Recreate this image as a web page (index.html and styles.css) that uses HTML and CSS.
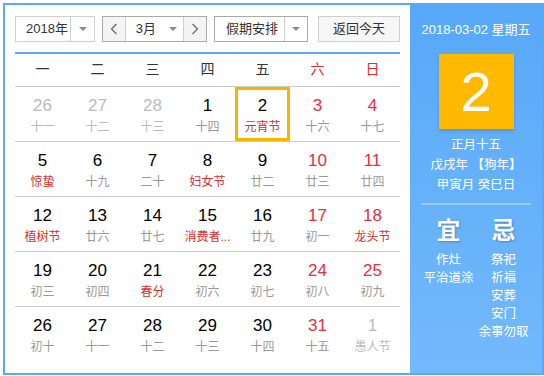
FILE: index.html
```html
<!DOCTYPE html>
<html lang="zh-CN">
<head>
<meta charset="utf-8">
<title>万年历</title>
<link rel="stylesheet" href="styles.css">
</head>
<body>
<div class="cal">
  <div class="main">
    <div class="toolbar">
      <div class="sel sel-year">
        <span class="sel-text">2018年</span>
        <span class="sel-arrow"><i class="tri"></i></span>
      </div>
      <div class="month-group">
        <span class="nav-btn"><svg width="8" height="12" viewBox="0 0 8 12"><polyline points="6.5,1 1.5,6 6.5,11" fill="none" stroke="#666" stroke-width="1.2"/></svg></span>
        <span class="month-sel"><span class="sel-text">3月</span><i class="tri"></i></span>
        <span class="nav-btn"><svg width="8" height="12" viewBox="0 0 8 12"><polyline points="1.5,1 6.5,6 1.5,11" fill="none" stroke="#666" stroke-width="1.2"/></svg></span>
      </div>
      <div class="sel sel-holiday">
        <span class="sel-text">假期安排</span>
        <span class="sel-arrow"><i class="tri"></i></span>
      </div>
      <div class="today-btn">返回今天</div>
    </div>
    <div class="week-head">
      <span>一</span><span>二</span><span>三</span><span>四</span><span>五</span><span class="red">六</span><span class="red">日</span>
    </div>
    <div class="grid">
      <div class="row">
        <div class="cell other"><b>26</b><em>十一</em></div>
        <div class="cell other"><b>27</b><em>十二</em></div>
        <div class="cell other"><b>28</b><em>十三</em></div>
        <div class="cell"><b>1</b><em>十四</em></div>
        <div class="cell sel-day"><b>2</b><em class="fest">元宵节</em></div>
        <div class="cell wk"><b>3</b><em>十六</em></div>
        <div class="cell wk"><b>4</b><em>十七</em></div>
      </div>
      <div class="row">
        <div class="cell"><b>5</b><em class="fest">惊蛰</em></div>
        <div class="cell"><b>6</b><em>十九</em></div>
        <div class="cell"><b>7</b><em>二十</em></div>
        <div class="cell"><b>8</b><em class="fest">妇女节</em></div>
        <div class="cell"><b>9</b><em>廿二</em></div>
        <div class="cell wk"><b>10</b><em>廿三</em></div>
        <div class="cell wk"><b>11</b><em>廿四</em></div>
      </div>
      <div class="row">
        <div class="cell"><b>12</b><em class="fest">植树节</em></div>
        <div class="cell"><b>13</b><em>廿六</em></div>
        <div class="cell"><b>14</b><em>廿七</em></div>
        <div class="cell"><b>15</b><em class="fest">消费者...</em></div>
        <div class="cell"><b>16</b><em>廿九</em></div>
        <div class="cell wk"><b>17</b><em>初一</em></div>
        <div class="cell wk"><b>18</b><em class="fest">龙头节</em></div>
      </div>
      <div class="row">
        <div class="cell"><b>19</b><em>初三</em></div>
        <div class="cell"><b>20</b><em>初四</em></div>
        <div class="cell"><b>21</b><em class="fest">春分</em></div>
        <div class="cell"><b>22</b><em>初六</em></div>
        <div class="cell"><b>23</b><em>初七</em></div>
        <div class="cell wk"><b>24</b><em>初八</em></div>
        <div class="cell wk"><b>25</b><em>初九</em></div>
      </div>
      <div class="row">
        <div class="cell"><b>26</b><em>初十</em></div>
        <div class="cell"><b>27</b><em>十一</em></div>
        <div class="cell"><b>28</b><em>十二</em></div>
        <div class="cell"><b>29</b><em>十三</em></div>
        <div class="cell"><b>30</b><em>十四</em></div>
        <div class="cell wk"><b>31</b><em>十五</em></div>
        <div class="cell other"><b>1</b><em>愚人节</em></div>
      </div>
    </div>
  </div>
  <div class="side">
    <div class="side-date">2018-03-02 星期五</div>
    <div class="big-day">2</div>
    <div class="lunar">
      <div>正月十五</div>
      <div>戊戌年 【狗年】</div>
      <div>甲寅月 癸巳日</div>
    </div>
    <div class="divider"></div>
    <div class="yiji">
      <div class="yj-col">
        <div class="yj-title">宜</div>
        <div class="yj-item">作灶</div>
        <div class="yj-item">平治道涂</div>
      </div>
      <div class="yj-col">
        <div class="yj-title">忌</div>
        <div class="yj-item">祭祀</div>
        <div class="yj-item">祈福</div>
        <div class="yj-item">安葬</div>
        <div class="yj-item">安门</div>
        <div class="yj-item">余事勿取</div>
      </div>
    </div>
  </div>
</div>
</body>
</html>
```
FILE: styles.css
```css
* { box-sizing: border-box; }
html, body { margin: 0; padding: 0; background: #fff; }
body {
  font-family: "Liberation Sans", "Noto Sans CJK SC", sans-serif;
  color: #333;
}
.cal {
  margin: 3px 0 0 3px;
  width: 541px;
  height: 372px;
  border: 2px solid #5aa9f8;
  display: flex;
}
.main {
  width: 405px;
  padding: 11px 10px 0 10px;
  background: #fff;
}
.toolbar {
  display: flex;
  height: 26px;
  font-size: 13px;
}
.sel {
  display: flex;
  border: 1px solid #cfcfcf;
  background: #fff;
  height: 26px;
}
.sel-text {
  line-height: 24px;
}
.sel-year { width: 80px; margin-right: 7px; }
.sel-year .sel-text { width: 54px; padding-left: 10px; }
.sel-arrow {
  flex: 1;
  border-left: 1px solid #cfcfcf;
  display: flex;
  align-items: center;
  justify-content: center;
}
.tri {
  display: block;
  width: 0;
  height: 0;
  border-left: 4px solid transparent;
  border-right: 4px solid transparent;
  border-top: 4px solid #8a8a8a;
}
.month-group {
  width: 105px;
  display: flex;
  border: 1px solid #aaa;
  margin-right: 7px;
}
.nav-btn {
  width: 22px;
  background: #f4f4f4;
  display: flex;
  align-items: center;
  justify-content: center;
}
.month-sel {
  width: 60px;
  border-left: 1px solid #cfcfcf;
  border-right: 1px solid #cfcfcf;
  display: flex;
  align-items: center;
  padding-left: 10px;
}
.month-sel .sel-text { width: 33px; }
.sel-holiday { width: 94px; margin-right: 10px; border-color: #aaa; }
.sel-holiday .sel-text { width: 69px; padding-left: 11px; }
.sel-holiday .sel-arrow { border-left-color: #cfcfcf; }
.today-btn {
  width: 82px;
  height: 26px;
  border: 1px solid #cfcfcf;
  background: #f7f7f7;
  text-align: center;
  line-height: 24px;
}
.week-head {
  margin-top: 10px;
  border-top: 2px solid #5aa9f8;
  height: 34px;
  display: grid;
  grid-template-columns: repeat(7, 55px);
  font-size: 14px;
  color: #333;
  text-align: center;
  line-height: 31px;
}
.red { color: #e02b2b; }
.row {
  display: grid;
  grid-template-columns: repeat(7, 55px);
  height: 55px;
  border-top: 1px solid #cccccc;
}
.cell {
  text-align: center;
  padding-top: 9px;
}
.cell b {
  display: block;
  font-weight: normal;
  font-size: 17px;
  line-height: 20px;
  color: #000;
}
.cell em {
  display: block;
  font-style: normal;
  font-size: 12px;
  line-height: 16px;
  margin-top: 3px;
  color: #999;
  white-space: nowrap;
}
.cell.wk b { color: #e8303a; }
.cell em.fest { color: #e02b2b; }
.cell.other b, .cell.other em { color: #bbb; }
.sel-day {
  box-shadow: inset 0 0 0 3px #f8b300;
}
.side {
  flex: 1;
  background: linear-gradient(#58a8f8, #73b9fc);
  color: #fff;
  display: flex;
  flex-direction: column;
  align-items: center;
  padding-top: 15px;
}
.side-date {
  font-size: 13px;
  line-height: 20px;
}
.big-day {
  margin-top: 14px;
  width: 75px;
  height: 75px;
  background: #ffb900;
  font-size: 56px;
  line-height: 75px;
  text-align: center;
  color: #fff;
  box-shadow: 0 2px 3px rgba(0, 0, 0, 0.15);
}
.lunar {
  margin-top: 6px;
  font-size: 12.5px;
  line-height: 20px;
  text-align: center;
  white-space: nowrap;
}
.divider {
  margin-top: 8px;
  width: 110px;
  height: 2px;
  background: rgba(255, 255, 255, 0.35);
}
.yiji {
  display: flex;
  width: 110px;
  margin-top: 11px;
}
.yj-col {
  width: 55px;
  text-align: center;
}
.yj-title {
  font-size: 24px;
  line-height: 30px;
  font-weight: bold;
  text-shadow: 1px 1px 2px rgba(0, 0, 0, 0.25);
  margin-bottom: 5px;
}
.yj-item {
  font-size: 12.5px;
  line-height: 18px;
  white-space: nowrap;
}
```
